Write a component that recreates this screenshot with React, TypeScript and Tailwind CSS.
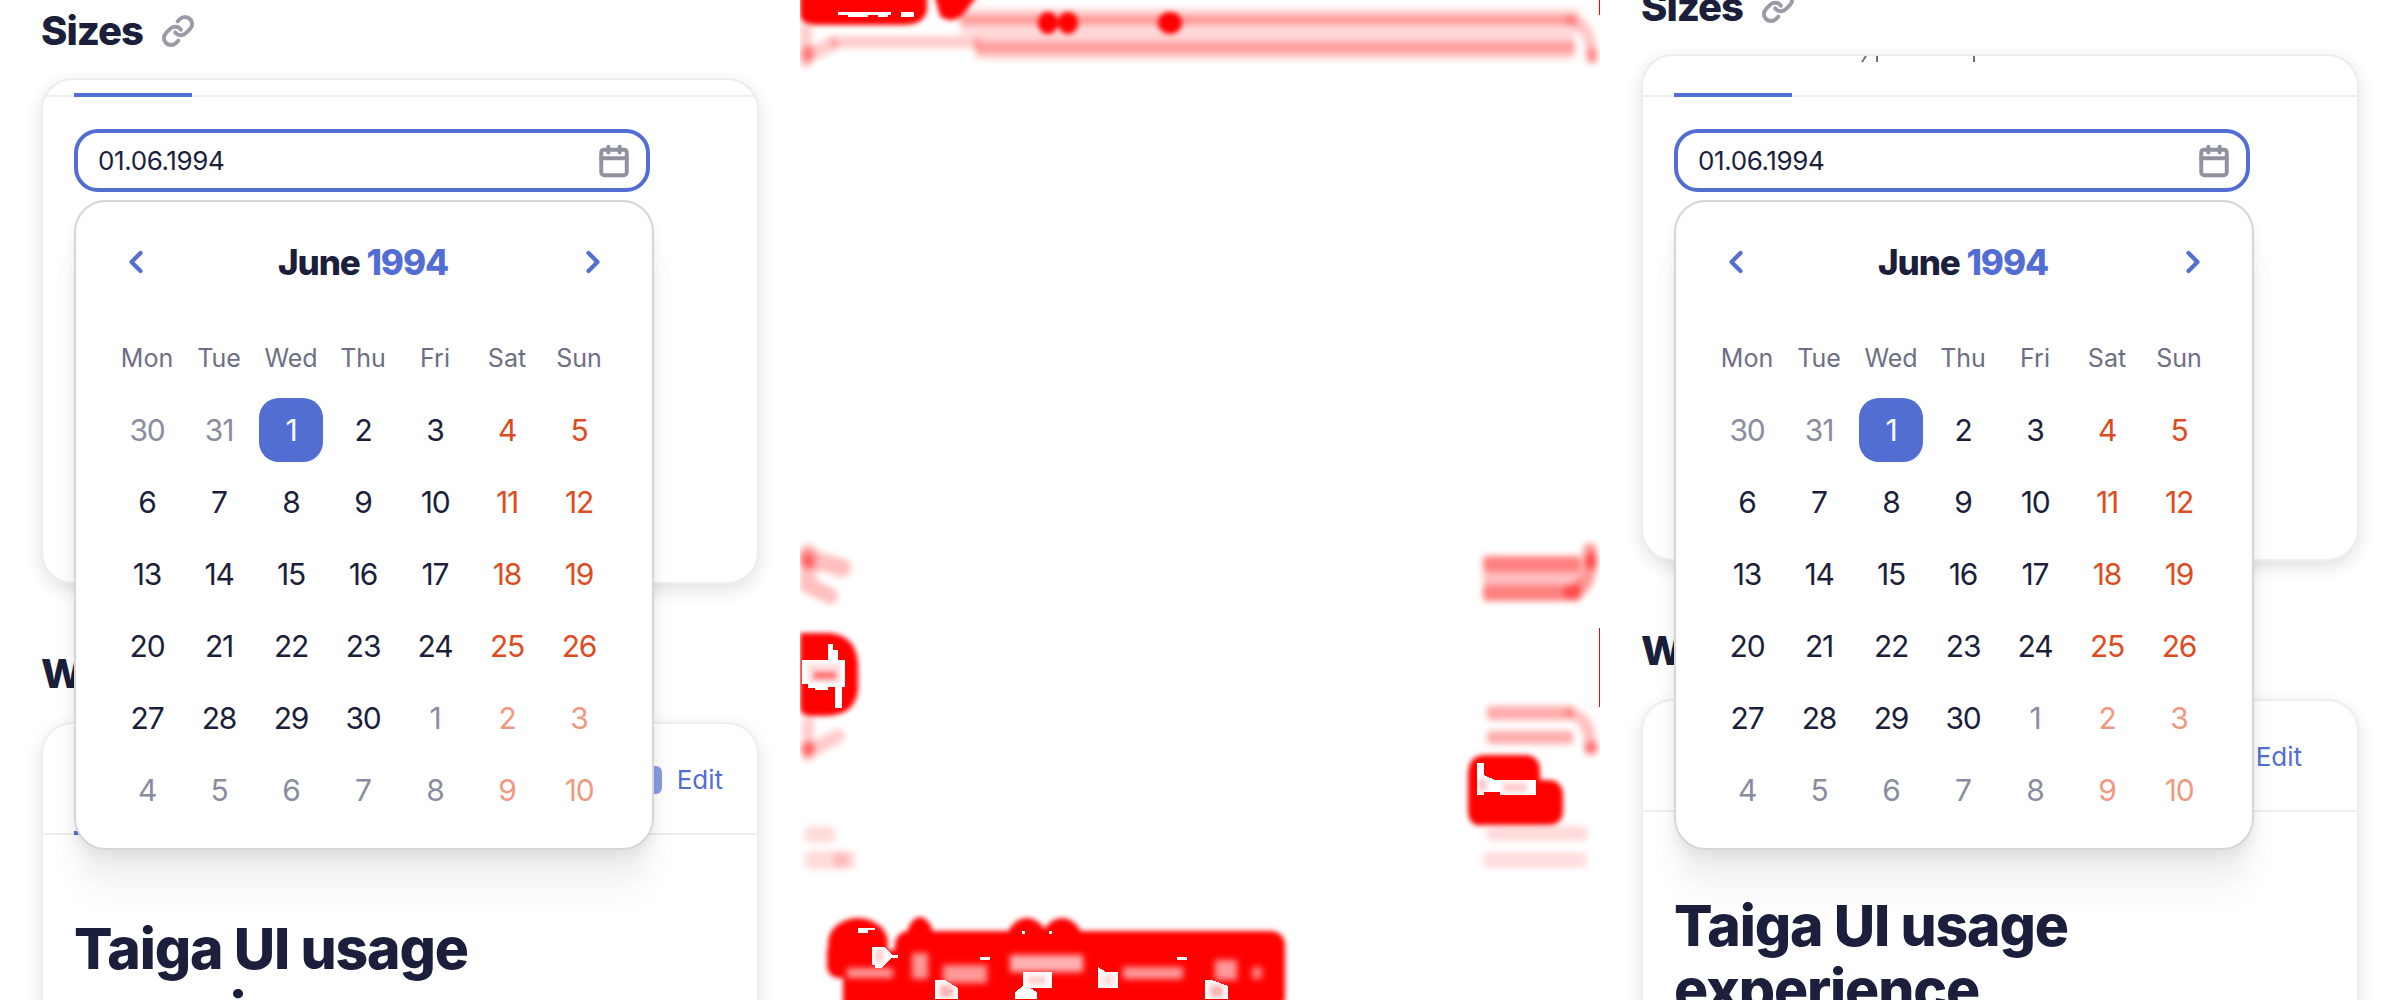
import { Calendar, ChevronLeft, ChevronRight, Link } from 'lucide-react'

type DayTone = 'day' | 'muted' | 'weekend' | 'weekendMuted' | 'selected'

const TONE: Record<DayTone, string> = {
  day:          'text-[#1b1f3b]',
  muted:        'text-[#8b8d9e]',
  weekend:      'text-[#dd4c1e]',
  weekendMuted: 'text-[#ee9a80]',
  selected:     'text-white',
}

const WEEKDAYS = ['Mon', 'Tue', 'Wed', 'Thu', 'Fri', 'Sat', 'Sun']

const DAYS = [
  30, 31, 1, 2, 3, 4, 5,
  6, 7, 8, 9, 10, 11, 12,
  13, 14, 15, 16, 17, 18, 19,
  20, 21, 22, 23, 24, 25, 26,
  27, 28, 29, 30, 1, 2, 3,
  4, 5, 6, 7, 8, 9, 10,
]

function toneOf(i: number): DayTone {
  if (i === 2) return 'selected'
  const outside = i < 2 || i > 31
  const weekend = i % 7 >= 5
  if (weekend) return outside ? 'weekendMuted' : 'weekend'
  return outside ? 'muted' : 'day'
}

function CalendarPopup() {
  return (
    <div className="absolute left-[74px] top-[200px] w-[580px] h-[650px] bg-white border-2 border-[#d6d6d6] rounded-[32px] pl-[35px] pt-[24px] shadow-[0_48px_32px_rgba(0,0,0,0.03),0_24px_24px_rgba(0,0,0,0.04),0_8px_12px_rgba(0,0,0,0.05)]">
      <div className="w-[504px] h-[72px] flex items-center justify-between">
        <div className="w-[50px] flex justify-center text-[#526ed3]">
          <ChevronLeft size={36} strokeWidth={2.8} />
        </div>
        <div className="text-[35px] font-extrabold tracking-[-0.03em] text-[#1b1f3b]">
          June <span className="text-[#526ed3]">1994</span>
        </div>
        <div className="w-[50px] flex justify-center text-[#526ed3] translate-x-[3px]">
          <ChevronRight size={36} strokeWidth={2.8} />
        </div>
      </div>

      <div className="mt-[24px] w-[504px] grid grid-cols-7">
        {WEEKDAYS.map(d => (
          <div key={d} className="h-[72px] pt-[2px] flex items-center justify-center text-[25px] text-[#6d6f84]">{d}</div>
        ))}
        {DAYS.map((d, i) => {
          const tone = toneOf(i)
          return (
            <div key={i} className={`h-[72px] flex items-center justify-center text-[30px] tracking-[-0.04em] ${TONE[tone]}`}>
              {tone === 'selected'
                ? <span className="w-16 h-16 rounded-[20px] bg-[#526ed3] flex items-center justify-center">{d}</span>
                : d}
            </div>
          )
        })}
      </div>
    </div>
  )
}

function Pane({ scrolled }: { scrolled: boolean }) {
  return (
    <div className="relative w-[800px] h-[1000px] overflow-hidden bg-white font-['Inter',sans-serif] text-[#1b1f3b]">
      <div className={`pl-[41px] w-[759px] ${scrolled ? '-mt-6' : ''}`}>
        <div className="h-[60px] pt-[2px] flex items-center gap-[18px]">
          <h2 className="text-[40px] font-extrabold tracking-[-0.025em]">Sizes</h2>
          <Link size={34} strokeWidth={2.8} className="text-[#9a9ba8]" />
        </div>

        {/* Card with the input */}
        <div className={`mt-[18px] w-[718px] border-2 border-[#eeeeee] rounded-[32px] bg-white shadow-[0_6px_18px_rgba(0,0,0,0.12)] ${scrolled ? 'h-[507px]' : 'h-[506px]'}`}>
          <div className={`relative border-b-2 border-[#eeeeee] ${scrolled ? 'h-[41px]' : 'h-[17px]'}`}>
            <div className="absolute left-[31px] -bottom-[2px] w-[118px] h-[4px] bg-[#526ed3]" />
            {scrolled && (
              <svg className="absolute left-[218px] top-0" width="120" height="7" viewBox="0 0 120 7">
                <path d="M5 0 L1 6" stroke="#6d6f84" strokeWidth="2" />
                <path d="M16 0 V6" stroke="#6d6f84" strokeWidth="2" />
                <path d="M113 0 V6" stroke="#6d6f84" strokeWidth="2" />
              </svg>
            )}
          </div>
          <div className="pl-[31px] pt-[32px]">
            <div className="w-[576px] h-[63px] border-4 border-[#526ed3] rounded-[24px] pl-[20px] pr-[15px] flex items-center justify-between">
              <span className="text-[26px] tracking-[-0.015em]">01.06.1994</span>
              <Calendar size={34} strokeWidth={2.8} className="text-[#90919f]" />
            </div>
          </div>
        </div>

        <div className="mt-[60px] h-[60px] flex items-center">
          <h2 className="text-[40px] font-extrabold tracking-[-0.02em]">With value</h2>
        </div>

        {/* Card with the text */}
        <div className="mt-[18px] w-[718px] h-[600px] border-2 border-[#eeeeee] rounded-[32px] bg-white shadow-[0_6px_18px_rgba(0,0,0,0.12)]">
          <div className={`relative h-[111px] pt-[2px] border-b-2 border-[#eeeeee] flex items-center justify-end gap-[15px] ${scrolled ? 'pr-[55px]' : 'pr-[34px]'}`}>
            <div className="absolute left-[31px] -bottom-[2px] w-[118px] h-[4px] bg-[#526ed3]" />
            <div className="w-[28px] h-[28px] rounded-md bg-[#8a9de2]" />
            <span className="text-[26px] text-[#526ed3]">Edit</span>
          </div>
          <div className="pl-[31px] pt-[82px]">
            <h1 className="text-[57px] leading-[64px] font-extrabold tracking-[-0.02em] w-[560px]">Taiga UI usage experience</h1>
          </div>
        </div>
      </div>

      <CalendarPopup />
    </div>
  )
}

// strips of the diff: x, y, w, h, opacity, corner radius
const SOFT: [number, number, number, number, number, number][] = [
  [960, 8, 620, 27, 0.14, 6],
  [960, 15, 615, 10, 0.3, 3],
  [830, 36, 150, 12, 0.2, 3],
  [975, 34, 600, 26, 0.14, 4],
  [975, 41, 600, 13, 0.27, 3],
  [1483, 556, 98, 16, 0.5, 4],
  [1483, 572, 98, 13, 0.25, 0],
  [1483, 585, 98, 16, 0.5, 4],
  [1487, 706, 86, 14, 0.33, 4],
  [1487, 731, 86, 13, 0.33, 4],
  [1487, 826, 100, 15, 0.15, 4],
  [1483, 852, 104, 16, 0.13, 4],
  [805, 826, 30, 17, 0.14, 5],
  [805, 851, 50, 18, 0.14, 5],
]

const SOFT_PATHS: [string, number, number][] = [
  ['M1572 20 Q1590 24 1592 58', 12, 0.22],
  ['M806 28 L806 62', 12, 0.2],
  ['M808 56 L832 44', 14, 0.2],
  ['M1590 550 Q1592 590 1570 592', 14, 0.4],
  ['M1572 713 Q1590 720 1591 748', 12, 0.25],
  ['M808 552 L808 585 L830 596', 16, 0.25],
  ['M808 558 L842 568', 18, 0.25],
  ['M808 722 L808 755', 12, 0.2],
  ['M808 752 L838 736', 14, 0.2],
]

const SPOTS: [number, number, number, number, number][] = [
  [808, 53, 6, 8, 0.3],
  [1592, 55, 5, 8, 0.3],
  [1591, 561, 6, 9, 0.5],
  [1591, 748, 7, 7, 0.4],
  [808, 562, 6, 7, 0.35],
  [808, 748, 7, 7, 0.4],
  [841, 860, 9, 8, 0.15],
]

const RED_PATHS = [
  'M800 -10 H927 V10 Q925 24 905 25 H815 Q800 24 800 14 Z',
  'M933 -10 H982 L962 16 Q950 24 940 16 Z',
  'M800 633 H830 Q857 636 858 665 V690 Q855 716 825 716 H810 Q800 715 800 708 Z',
  'M1468 775 Q1468 755 1485 755 H1525 Q1540 755 1540 772 V780 H1548 Q1563 780 1563 797 V810 Q1563 825 1548 825 H1485 Q1468 828 1468 810 Z',
]

const BUMPS: [number, number, number, number][] = [
  [1048, 23, 10, 11], [1068, 23, 10, 11], [1170, 23, 12, 11],
  // title blob, bumps for the tall letters
  [858, 943, 30, 25], [920, 942, 14, 25],
  [1027, 943, 21, 25], [1062, 943, 21, 25],
]

const RED_RECTS: [number, number, number, number, number][] = [
  [827, 940, 30, 38, 12],
  [843, 950, 60, 60, 8],
  [895, 931, 390, 80, 14],
]

// nearly white patches that show through the title blob
const PALE: [number, number, number, number, number][] = [
  [847, 968, 46, 10, 0.6], [912, 953, 16, 26, 0.6], [943, 965, 44, 18, 0.6],
  [1010, 955, 73, 17, 0.7], [1123, 967, 60, 12, 0.6], [1215, 960, 22, 20, 0.6],
  [1252, 967, 10, 12, 0.5],
]

const HOLES = [
  'M838 12 H891 V15 H888 V17 H878 V15 H868 V17 H848 V15 H838 Z',
  'M901 12 H914 V17 H901 Z',
  'M802 660 H828 V644 H833 V650 H838 V660 H845 V687 H842 V708 H835 V687 H828 V690 H815 V688 H808 V684 H802 Z',
  'M1477 763 H1484 V775 L1495 780 H1536 V795 H1500 V792 H1484 V795 H1477 Z',
  'M858 928 H875 V930 H868 V933 H858 Z',
  'M872 947 H884 L892 955 H898 V958 H891 L882 968 H875 V965 H872 Z',
  'M980 957 H990 V960 H980 Z',
  'M1177 957 H1187 V960 H1177 Z',
  'M1023 972 H1052 V988 H1030 L1037 992 V999 H1015 V992 L1023 986 Z',
  'M935 980 H945 L958 988 V999 H935 Z',
  'M1098 967 L1106 972 H1118 V988 H1098 Z',
  'M1205 980 H1212 L1228 986 V999 H1205 Z',
  'M1022 931 H1025 V934 H1022 Z',
  'M1049 931 H1052 V934 H1049 Z',
]

const TINTS: [number, number, number, number, number][] = [
  [808, 664, 32, 18, 0.14], [814, 672, 22, 7, 0.5], [1503, 783, 24, 9, 0.2], [1479, 779, 7, 12, 0.25],
  [875, 950, 8, 12, 0.2], [1028, 976, 18, 8, 0.2], [940, 985, 13, 12, 0.3], [1102, 975, 12, 10, 0.15], [1210, 985, 13, 12, 0.3],
]

function DiffPane() {
  return (
    <div className="w-[800px] h-[1000px] overflow-hidden bg-white">
      <svg width="800" height="1000" viewBox="800 0 800 1000" className="block">
        <defs>
          <filter id="soft" x="-10%" y="-50%" width="120%" height="200%"><feGaussianBlur stdDeviation="3.2" /></filter>
          <filter id="hard" x="-10%" y="-10%" width="120%" height="120%"><feGaussianBlur stdDeviation="2.4" /></filter>
        </defs>
        <g filter="url(#soft)" fill="#ff0000">
          {SOFT.map(([x, y, w, h, o, r], i) => <rect key={i} x={x} y={y} width={w} height={h} rx={r} opacity={o} />)}
          {SOFT_PATHS.map(([d, w, o], i) => <path key={i} d={d} fill="none" stroke="#ff0000" strokeWidth={w} strokeLinecap="round" opacity={o} />)}
          {SPOTS.map(([cx, cy, rx, ry, o], i) => <ellipse key={i} cx={cx} cy={cy} rx={rx} ry={ry} opacity={o} />)}
        </g>
        <g filter="url(#hard)" fill="#ff0000">
          {RED_PATHS.map((d, i) => <path key={i} d={d} />)}
          {BUMPS.map(([cx, cy, rx, ry], i) => <ellipse key={i} cx={cx} cy={cy} rx={rx} ry={ry} />)}
          {RED_RECTS.map(([x, y, w, h, r], i) => <rect key={i} x={x} y={y} width={w} height={h} rx={r} />)}
        </g>
        <g filter="url(#soft)" fill="#ffffff">
          {PALE.map(([x, y, w, h, o], i) => <rect key={i} x={x} y={y} width={w} height={h} opacity={o} />)}
        </g>
        <g fill="#ffffff" shapeRendering="crispEdges">
          {HOLES.map((d, i) => <path key={i} d={d} />)}
        </g>
        <g filter="url(#hard)" fill="#ff0000">
          {TINTS.map(([x, y, w, h, o], i) => <rect key={i} x={x} y={y} width={w} height={h} opacity={o} />)}
        </g>
        <rect x="1599" y="0" width="1" height="15" fill="#ff0000" />
        <rect x="1599" y="628" width="1" height="79" fill="#e01010" />
      </svg>
    </div>
  )
}

export default function App() {
  return (
    <div className="w-[2400px] h-[1000px] flex overflow-hidden bg-white">
      <Pane scrolled={false} />
      <DiffPane />
      <Pane scrolled />
    </div>
  )
}
